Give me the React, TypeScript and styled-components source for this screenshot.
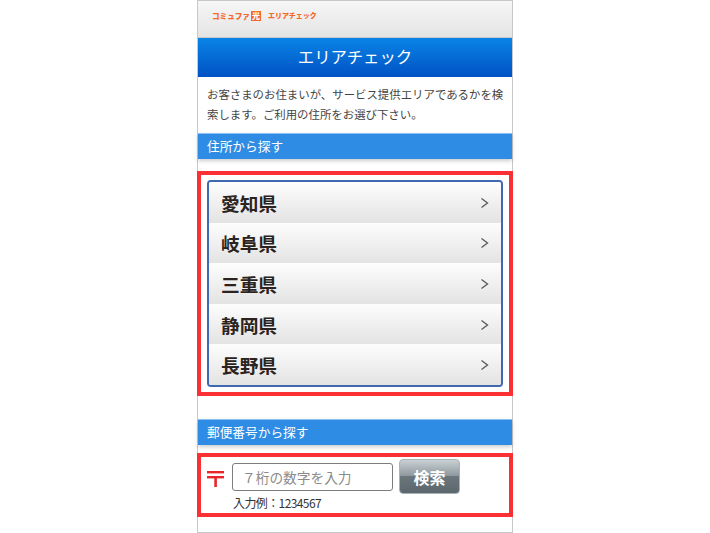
import React from "react";
import styled, { createGlobalStyle } from "styled-components";

const FONT = `"Noto Sans CJK JP", "Noto Sans", "Liberation Sans", sans-serif`;

const Global = createGlobalStyle`
  html, body { margin: 0; padding: 0; background: #fff; }
  body { font-family: ${FONT}; }
`;

const Page = styled.div`
  display: flex;
  justify-content: center;
  width: 710px;
  height: 533px;
  overflow: hidden;
`;

const Phone = styled.div`
  box-sizing: border-box;
  width: 316px;
  height: 533px;
  border: 1px solid #c8c8c8;
  background: #fff;
  display: flex;
  flex-direction: column;
`;

const TopBar = styled.div`
  box-sizing: border-box;
  flex: none;
  height: 37px;
  padding: 9px 0 0 14px;
  display: flex;
  align-items: flex-start;
  gap: 7px;
  background: linear-gradient(#f6f6f6, #e4e4e4);
  border-bottom: 1px solid #c9c9c9;
`;

const Logo = styled.span`
  display: inline-flex;
  align-items: center;
  gap: 1px;
  font-size: 7.6px;
  line-height: 11px;
  font-weight: 900;
  color: #f4682a;
`;

const LogoMark = styled.span`
  display: inline-block;
  width: 10px;
  height: 10px;
  font-size: 8px;
  line-height: 10px;
  text-align: center;
  color: #fff;
  background: #f4682a;
`;

const LogoSub = styled.span`
  font-size: 7px;
  line-height: 11px;
  font-weight: 900;
  color: #f4682a;
`;

const TitleBar = styled.h1`
  margin: 0;
  flex: none;
  box-sizing: border-box;
  height: 39px;
  padding-bottom: 3px;
  display: flex;
  align-items: center;
  justify-content: center;
  font-size: 16.4px;
  font-weight: 400;
  color: #fff;
  background: linear-gradient(#0a84e6, #0052c4);
`;

const Intro = styled.p`
  margin: 0;
  flex: none;
  height: 56px;
  box-sizing: border-box;
  padding: 7px 7px 0 9px;
  font-size: 11.42px;
  line-height: 20px;
  color: #444;
`;

const SectionHead = styled.h2`
  margin: 0;
  flex: none;
  box-sizing: border-box;
  height: 26px;
  padding: 0 0 2px 9px;
  display: flex;
  align-items: center;
  font-size: 12.7px;
  font-weight: 400;
  color: #fff;
  background: #2e8ce4;
  border-top: 1px solid #8cc0f0;
  box-shadow: 0 2px 4px rgba(0, 0, 0, 0.2);
`;

const Highlight = styled.div`
  box-sizing: border-box;
  flex: none;
  width: 316px;
  margin-left: -1px;
  border: 4px solid #fb3035;
`;

const PrefBox = styled(Highlight)`
  margin-top: 12px;
  height: 225px;
  padding: 5px 6px;
`;

const PrefList = styled.ul`
  list-style: none;
  margin: 0;
  padding: 0;
  box-sizing: border-box;
  height: 207px;
  width: 296px;
  border: 2px solid #3f68b0;
  border-radius: 4px;
  overflow: hidden;
`;

const PrefRow = styled.li`
  box-sizing: border-box;
  height: 40.6px;
  padding: 0 12px;
  display: flex;
  align-items: center;
  justify-content: space-between;
  font-size: 18.7px;
  font-weight: 700;
  color: #2b2320;
  background: linear-gradient(#fdfdfd, #e3e3e3);
`;

const Chevron = styled.svg`
  width: 9px;
  height: 12px;
  margin-top: 1px;
  fill: none;
  stroke: #5c5c5c;
  stroke-width: 1.4;
`;

const ZipHead = styled(SectionHead)`
  margin-top: 23px;
`;

const ZipBox = styled(Highlight)`
  margin-top: 8px;
  height: 64px;
  padding: 2px 0 0 6px;
`;

const ZipRow = styled.div`
  display: flex;
  align-items: center;
`;

const PostMark = styled.svg`
  width: 17px;
  height: 16px;
  margin-top: 5px;
  fill: #e8262b;
`;

const ZipInput = styled.div`
  box-sizing: border-box;
  width: 161px;
  height: 28px;
  margin-left: 8px;
  padding-left: 9px;
  display: flex;
  align-items: center;
  border: 1px solid #7d7d7d;
  border-radius: 3px;
  font-size: 13.7px;
  color: #8a8a8a;
  background: #fff;
`;

const SearchButton = styled.div`
  box-sizing: border-box;
  width: 61px;
  height: 35px;
  margin-left: 6px;
  display: flex;
  align-items: center;
  justify-content: center;
  border: 1px solid #a9b2b8;
  border-radius: 4px;
  font-size: 16px;
  font-weight: 700;
  color: #fff;
  background: linear-gradient(#c9d0d3 0%, #8e999e 48%, #6a767c 50%, #5c676d 100%);
`;

const ZipHint = styled.div`
  margin: 1px 0 0 26px;
  font-size: 12px;
  line-height: 16px;
  letter-spacing: -0.6px;
  color: #333;
`;

const PREFS = ["愛知県", "岐阜県", "三重県", "静岡県", "長野県"];

export default function App() {
  return (
    <Page>
      <Global />
      <Phone>
        <TopBar>
          <Logo>
            コミュファ<LogoMark>光</LogoMark>
          </Logo>
          <LogoSub>エリアチェック</LogoSub>
        </TopBar>
        <TitleBar>エリアチェック</TitleBar>
        <Intro>
          お客さまのお住まいが、サービス提供エリアであるかを検索します。ご利用の住所をお選び下さい。
        </Intro>
        <SectionHead>住所から探す</SectionHead>
        <PrefBox>
          <PrefList>
            {PREFS.map((p) => (
              <PrefRow key={p}>
                {p}
                <Chevron viewBox="0 0 9 12">
                  <path d="M1.5 1.5 L7.5 6 L1.5 10.5" />
                </Chevron>
              </PrefRow>
            ))}
          </PrefList>
        </PrefBox>
        <ZipHead>郵便番号から探す</ZipHead>
        <ZipBox>
          <ZipRow>
            <PostMark viewBox="0 0 17 16">
              <rect x="0" y="0" width="17" height="2.4" />
              <rect x="0" y="5" width="17" height="2.4" />
              <rect x="7.3" y="5" width="2.6" height="11" />
            </PostMark>
            <ZipInput>７桁の数字を入力</ZipInput>
            <SearchButton>検索</SearchButton>
          </ZipRow>
          <ZipHint>入力例：1234567</ZipHint>
        </ZipBox>
      </Phone>
    </Page>
  );
}
